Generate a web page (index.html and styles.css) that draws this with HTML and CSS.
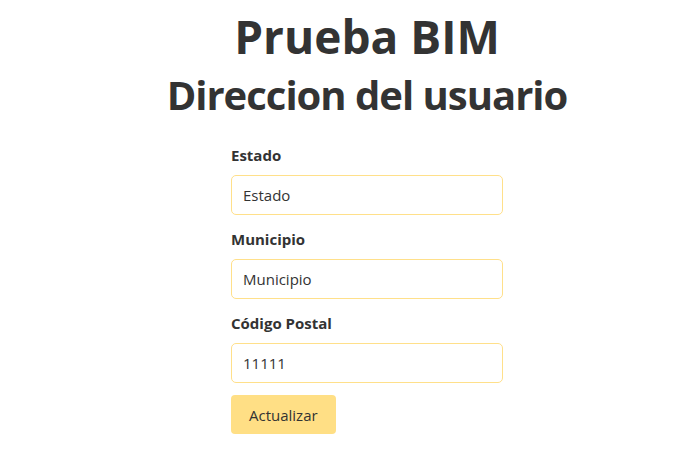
FILE: index.html
```html
<!DOCTYPE html>
<html lang="es">
<head>
<meta charset="utf-8">
<title>Prueba BIM</title>
<link rel="stylesheet" href="styles.css">
</head>
<body>
<div class="page">
  <h1 class="title">Prueba BIM</h1>
  <h2 class="subtitle">Direccion del usuario</h2>
  <form class="form">
    <div class="field">
      <label class="label" for="estado">Estado</label>
      <input class="input" id="estado" type="text" value="Estado">
    </div>
    <div class="field">
      <label class="label" for="municipio">Municipio</label>
      <input class="input" id="municipio" type="text" value="Municipio">
    </div>
    <div class="field">
      <label class="label" for="cp">Código Postal</label>
      <input class="input" id="cp" type="text" value="11111">
    </div>
    <button class="button" type="button">Actualizar</button>
  </form>
</div>
</body>
</html>
```
FILE: styles.css
```css
html, body {
  margin: 0;
  padding: 0;
  background: #ffffff;
}
body {
  font-family: "Open Sans", "Noto Sans", sans-serif;
  color: #333333;
}
.page {
  padding-left: 57px;
  display: flex;
  flex-direction: column;
  align-items: center;
}
.title {
  margin: 8px 0 0 0;
  font-size: 46px;
  line-height: 56px;
  font-weight: 700;
}
.subtitle {
  margin: 5px 0 0 0;
  font-size: 40px;
  line-height: 52px;
  letter-spacing: -1px;
  font-weight: 700;
}
.form {
  width: 272px;
  margin-top: 22px;
  display: flex;
  flex-direction: column;
}
.field {
  display: flex;
  flex-direction: column;
  margin-bottom: 12px;
}
.label {
  font-weight: 700;
  font-size: 15px;
  line-height: 24px;
  margin-bottom: 8px;
}
.input {
  box-sizing: border-box;
  height: 40px;
  width: 100%;
  border: 1px solid #ffe08a;
  border-radius: 5px;
  padding: 0 11px;
  font-family: inherit;
  font-size: 15px;
  color: #333333;
  background: #ffffff;
  outline: none;
}
.button {
  align-self: flex-start;
  box-sizing: border-box;
  height: 39px;
  padding: 0 18px;
  border: none;
  border-radius: 4px;
  background: #ffdf85;
  font-family: inherit;
  font-size: 15px;
  color: #333333;
}
```
